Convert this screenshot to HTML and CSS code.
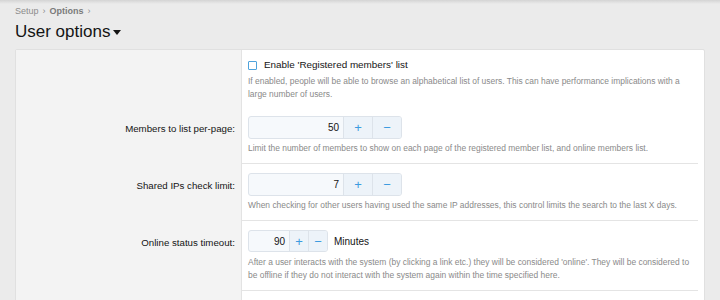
FILE: index.html
```html
<!DOCTYPE html>
<html>
<head>
<meta charset="utf-8">
<link rel="stylesheet" href="styles.css">
</head>
<body>
<div class="topshade"></div>
<div class="page">
  <div class="crumbs"><span>Setup</span><span class="sep">›</span><span class="cur">Options</span><span class="sep">›</span></div>
  <h1 class="title">User options <span class="caret"></span></h1>
  <div class="panel">
    <div class="row first">
      <div class="label"></div>
      <div class="ctrl">
        <label class="check"><span class="box"></span>Enable 'Registered members' list</label>
        <div class="hint">If enabled, people will be able to browse an alphabetical list of users. This can have performance implications with a large number of users.</div>
      </div>
    </div>
    <div class="row">
      <div class="label">Members to list per-page:</div>
      <div class="ctrl sepline">
        <div class="spin wide"><span class="val">50</span><span class="btn">+</span><span class="btn">−</span></div>
        <div class="hint">Limit the number of members to show on each page of the registered member list, and online members list.</div>
      </div>
    </div>
    <div class="row">
      <div class="label">Shared IPs check limit:</div>
      <div class="ctrl sepline">
        <div class="spin wide"><span class="val">7</span><span class="btn">+</span><span class="btn">−</span></div>
        <div class="hint">When checking for other users having used the same IP addresses, this control limits the search to the last X days.</div>
      </div>
    </div>
    <div class="row">
      <div class="label">Online status timeout:</div>
      <div class="ctrl sepline">
        <div class="inline"><div class="spin small"><span class="val">90</span><span class="btn">+</span><span class="btn">−</span></div><span class="unit">Minutes</span></div>
        <div class="hint">After a user interacts with the system (by clicking a link etc.) they will be considered 'online'. They will be considered to be offline if they do not interact with the system again within the time specified here.</div>
      </div>
    </div>
    <div class="row">
      <div class="label"></div>
      <div class="ctrl"></div>
    </div>
  </div>
</div>
</body>
</html>
```
FILE: styles.css
```css
html, body { margin: 0; padding: 0; }
body {
  background: #ebebeb;
  font-family: "Liberation Sans", Arial, sans-serif;
  color: #141414;
  height: 300px;
  overflow: hidden;
  position: relative;
}
.topshade {
  position: absolute; left: 0; right: 0; top: 0; height: 4px;
  background: linear-gradient(#d4d4d4, #ebebeb);
}
.page { padding: 0 15px; position: relative; }
.crumbs {
  padding-top: 6px;
  font-size: 9px;
  line-height: 11px;
  color: #8c8c8c;
  display: flex;
  gap: 4px;
}
.crumbs .cur { font-weight: bold; color: #7a7a7a; }
.title {
  margin: 4px 0 0 0;
  font-size: 17px;
  line-height: 21px;
  font-weight: normal;
  color: #141414;
  display: flex;
  align-items: center;
  gap: 3px;
}
.caret {
  display: inline-block;
  width: 0; height: 0;
  border-left: 4.5px solid transparent;
  border-right: 4.5px solid transparent;
  border-top: 5px solid #141414;
  margin-top: 1px;
}
.panel {
  margin-top: 7px;
  width: 688px;
  background: #fff;
  border: 1px solid #e0e0e0;
  border-radius: 2px;
}
.row {
  display: grid;
  grid-template-columns: 226px 1fr;
}
.label {
  background: #f3f3f3;
  border-right: 1px solid #e3e3e3;
  text-align: right;
  font-size: 9.7px;
  color: #141414;
  padding: 15px 6px 0 0;
  line-height: 13px;
}
.ctrl {
  padding: 9px 7px 8.5px 6px;
  margin-right: 6px;
}
.sepline { border-bottom: 1px solid #e4e4e4; }
.row.first .ctrl { padding-top: 8px; padding-bottom: 7px; }
.check {
  display: flex;
  align-items: center;
  font-size: 9.9px;
  line-height: 14px;
  color: #141414;
}
.box {
  width: 7px; height: 7px;
  border: 1px solid #4ea3dc;
  border-radius: 1px;
  margin-right: 7px;
  background: #fff;
}
.hint {
  font-size: 8.45px;
  line-height: 12.5px;
  color: #8a8a8a;
  margin-top: 3px;
}
.spin {
  display: flex;
  height: 23px;
  border: 1px solid #dde3ea;
  border-radius: 3px;
  background: #f6f9fc;
  box-sizing: border-box;
  font-size: 10px;
  overflow: hidden;
}
.spin .val {
  flex: 1;
  display: flex; align-items: center; justify-content: flex-end;
  padding-right: 4px;
  color: #141414;
}
.spin .btn {
  display: flex; align-items: center; justify-content: center;
  background: #edf3f9;
  border-left: 1px solid #dde3ea;
  color: #3d9be0;
  font-size: 13px;
}
.spin.wide { width: 154px; }
.spin.wide .btn { width: 28px; }
.spin.small { width: 80px; height: 22px; }
.spin.small .btn { width: 18px; }
.inline { display: flex; align-items: center; gap: 6px; }
.inline + .hint { margin-top: 4px; }
.unit { font-size: 10px; color: #141414; }
.row:last-child .label { height: 20px; }
```
